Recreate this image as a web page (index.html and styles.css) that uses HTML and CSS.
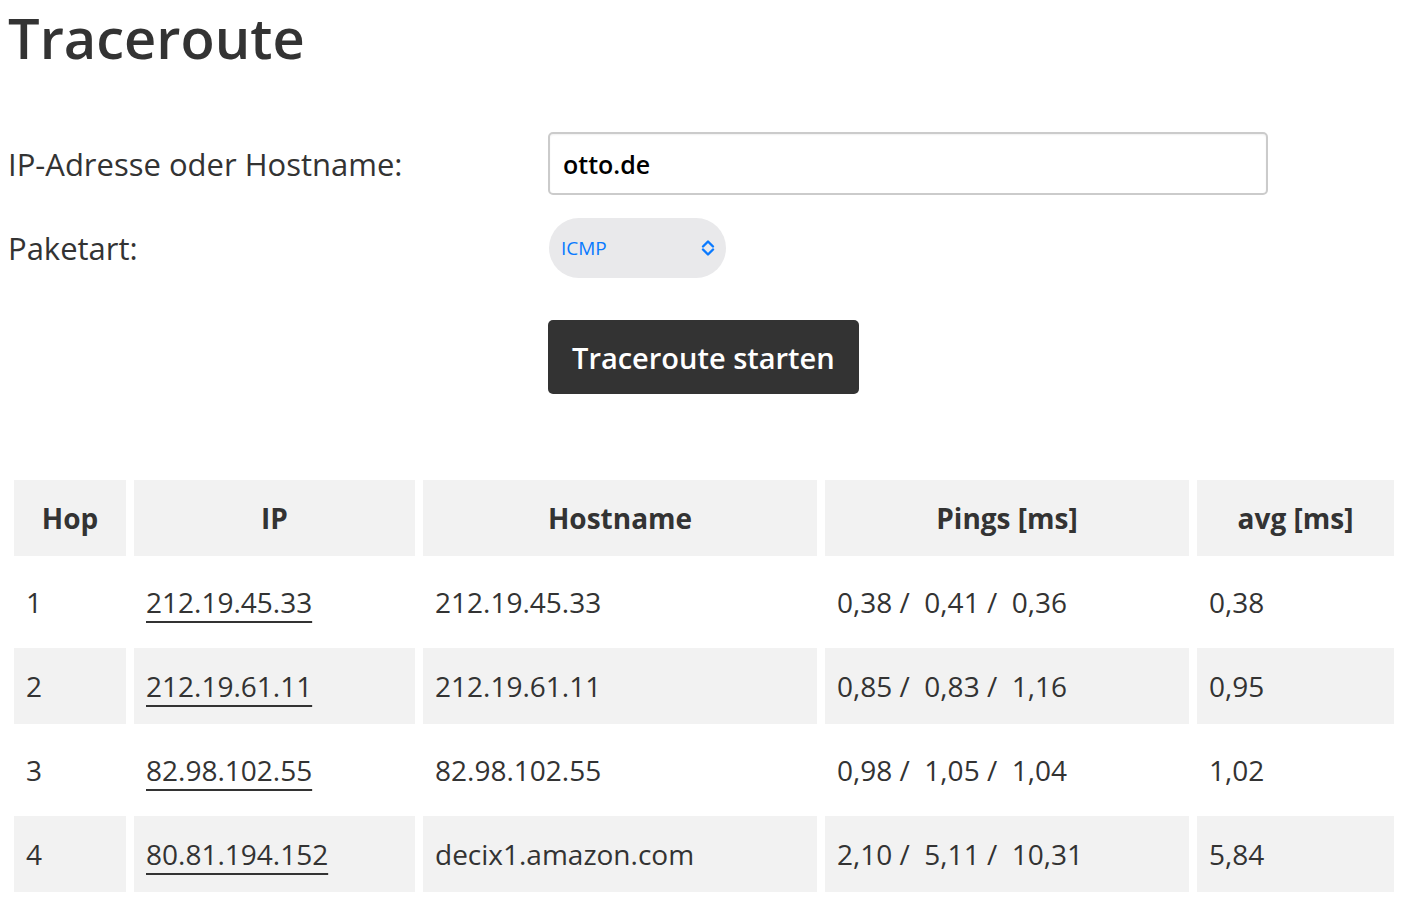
FILE: index.html
```html
<!DOCTYPE html>
<html lang="de">
<head>
    <meta charset="UTF-8">
    <meta name="viewport" content="width=device-width, initial-scale=1.0">
    <title>Traceroute</title>
    <link rel="stylesheet" href="styles.css">
</head>
<body>

<div class="container">
    <h1>Traceroute</h1>

    <form class="trace-form" onsubmit="return false;">
        <div class="form-row">
            <label for="host">IP-Adresse oder Hostname:</label>
            <input type="text" id="host" name="host" value="otto.de">
        </div>
        <div class="form-row form-row-select">
            <label for="proto">Paketart:</label>
            <div class="select-wrap">
                <select id="proto" name="proto">
                    <option>ICMP</option>
                    <option>UDP</option>
                    <option>TCP</option>
                </select>
                <svg class="select-arrows" width="16" height="18" viewBox="0 0 16 18" fill="none" stroke="#0a7aff" stroke-width="2.4" stroke-linecap="round" stroke-linejoin="round">
                    <path d="M3 7.5 L8 2.5 L13 7.5"/>
                    <path d="M3 10.5 L8 15.5 L13 10.5"/>
                </svg>
            </div>
        </div>
        <div class="form-row form-actions">
            <span class="spacer"></span>
            <button type="submit">Traceroute starten</button>
        </div>
    </form>

    <table class="hops">
        <colgroup>
            <col class="col-hop">
            <col class="col-ip">
            <col class="col-host">
            <col class="col-pings">
            <col class="col-avg">
        </colgroup>
        <thead>
            <tr>
                <th>Hop</th>
                <th>IP</th>
                <th>Hostname</th>
                <th>Pings [ms]</th>
                <th>avg [ms]</th>
            </tr>
        </thead>
        <tbody>
            <tr>
                <td>1</td>
                <td><a href="#">212.19.45.33</a></td>
                <td>212.19.45.33</td>
                <td>0,38 /&nbsp; 0,41 /&nbsp; 0,36</td>
                <td>0,38</td>
            </tr>
            <tr>
                <td>2</td>
                <td><a href="#">212.19.61.11</a></td>
                <td>212.19.61.11</td>
                <td>0,85 /&nbsp; 0,83 /&nbsp; 1,16</td>
                <td>0,95</td>
            </tr>
            <tr>
                <td>3</td>
                <td><a href="#">82.98.102.55</a></td>
                <td>82.98.102.55</td>
                <td>0,98 /&nbsp; 1,05 /&nbsp; 1,04</td>
                <td>1,02</td>
            </tr>
            <tr>
                <td>4</td>
                <td><a href="#">80.81.194.152</a></td>
                <td>decix1.amazon.com</td>
                <td>2,10 /&nbsp; 5,11 /&nbsp; 10,31</td>
                <td>5,84</td>
            </tr>
        </tbody>
    </table>
</div>

</body>
</html>
```

FILE: styles.css
```css
body {
    font-family: "Open Sans", "Liberation Sans", sans-serif;
    font-size: 28px;
    color: #333;
    background: #fff;
    margin: 0;
    padding: 3px 6px 0;
}
h1 {
    font-size: 56px;
    font-weight: 600;
    line-height: 1.2;
    margin: 1px 0 0 2px;
    color: #333;
}
.trace-form {
    margin-top: 61px;
}
.form-row {
    display: flex;
    align-items: center;
    margin-bottom: 23px;
}
.form-row label,
.form-row .spacer {
    width: 542px;
    flex: none;
}
.form-row label {
    font-size: 31px;
    padding-left: 2px;
    box-sizing: border-box;
}
.form-row-select {
    margin-bottom: 42px;
}
.form-actions {
    margin-bottom: 0;
}
input[type="text"] {
    box-sizing: border-box;
    width: 720px;
    height: 63px;
    padding: 0 13px;
    border: 2px solid #cbcbcb;
    border-radius: 5px;
    font-family: inherit;
    font-size: 25px;
    font-weight: 600;
    color: #000;
    box-shadow: inset 0 1px 2px rgba(0, 0, 0, 0.06);
}
.select-wrap {
    position: relative;
    width: 177px;
    height: 60px;
    margin-left: 1px;
}
select {
    -webkit-appearance: none;
    appearance: none;
    width: 100%;
    height: 100%;
    border: none;
    border-radius: 30px;
    background: #e9e9eb;
    padding: 0 12px;
    font-family: inherit;
    font-size: 19px;
    color: #0a7aff;
}
.select-arrows {
    position: absolute;
    right: 10px;
    top: 21px;
    pointer-events: none;
}
button {
    height: 74px;
    padding: 0 24px;
    border: none;
    border-radius: 5px;
    background: #333;
    color: #fff;
    font-family: inherit;
    font-size: 29px;
    font-weight: 600;
    cursor: pointer;
}
button:hover {
    background: #222;
}
.hops {
    width: 1396px;
    margin-top: 78px;
    border-spacing: 8px;
    table-layout: fixed;
}
.col-hop { width: 112px; }
.col-ip { width: 281px; }
.col-host { width: 394px; }
.col-pings { width: 364px; }
.col-avg { width: 197px; }
.hops tr {
    height: 76px;
}
.hops th,
.hops td {
    padding: 0 12px;
    text-align: left;
    white-space: nowrap;
}
.hops th {
    background: #f2f2f2;
    font-weight: 700;
    text-align: center;
}
.hops tbody tr:nth-child(even) td {
    background: #f2f2f2;
}
.hops a {
    color: #333;
    text-decoration: underline;
    text-decoration-thickness: 2px;
    text-underline-offset: 8px;
}
```
